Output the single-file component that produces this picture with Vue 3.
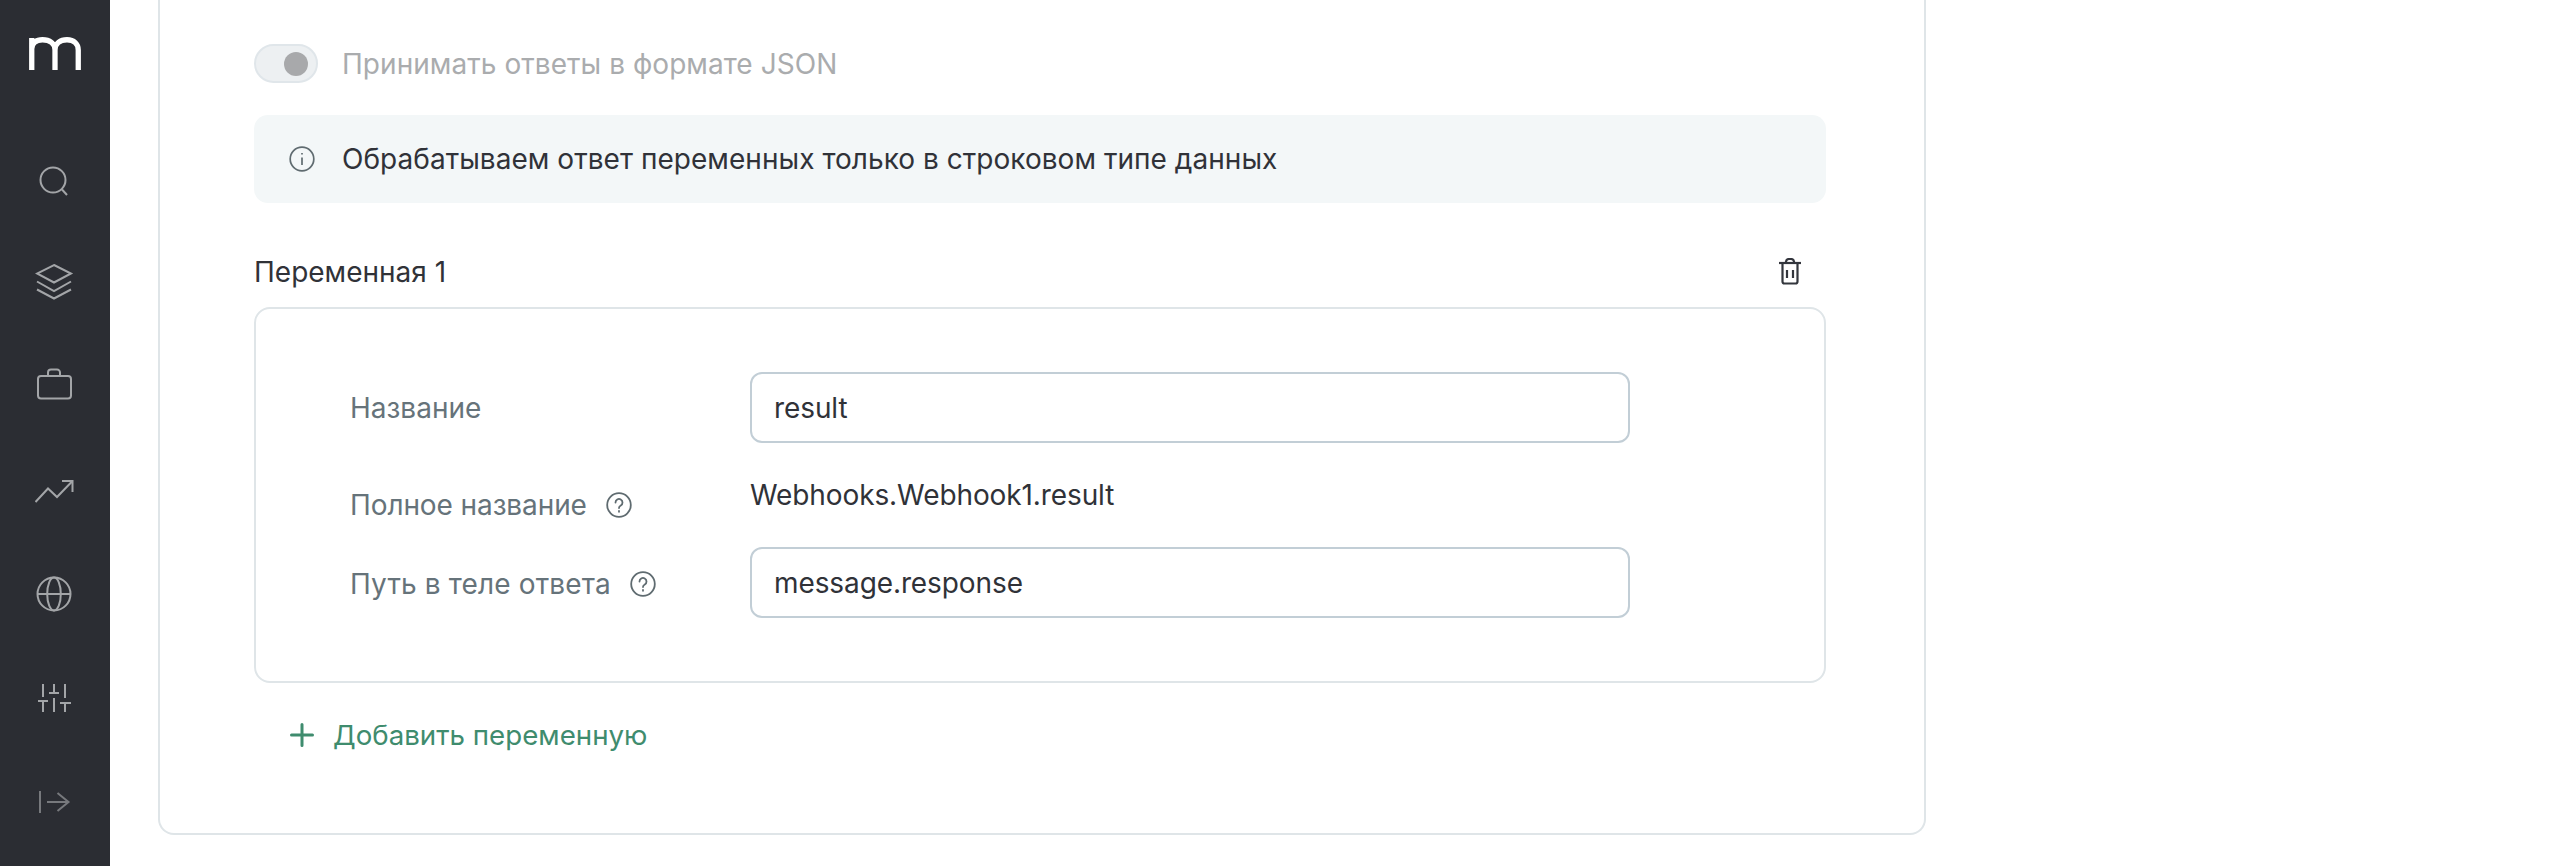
<script setup>
const rows = [
  { label: 'Название', value: 'result', input: true },
  { label: 'Полное название', value: 'Webhooks.Webhook1.result', help: true },
  { label: 'Путь в теле ответа', value: 'message.response', input: true, help: true },
]
</script>

<template>
  <div class="page">
    <nav class="sidebar">
      <svg class="logo" width="52" height="33" viewBox="0 0 52 33" fill="none" stroke="#fff" stroke-width="5.300">
        <path d="M2.75 33V1M2.75 12C2.75 5.500 7.500 2.750 13.500 2.750C20.500 2.750 26 6 26 13V33M26 13C26 6 31.500 2.750 38 2.750C45 2.750 49.250 7 49.250 13V33" />
      </svg>
      <div class="nav-item">
        <svg viewBox="0 0 40 40" fill="none" stroke="#a3a5a8" stroke-width="2">
          <circle cx="18" cy="23" r="12.500" /><path d="M27 32.500L32 38" />
        </svg>
      </div>
      <div class="nav-item">
        <svg viewBox="0 0 40 40" fill="none" stroke="#a3a5a8" stroke-width="2">
          <path d="M19 4L36 12.500L19 21.500L2 12.500Z" /><path d="M2 20.500L19 30L36 20.500" /><path d="M2 28.500L19 37.500L36 28.500" />
        </svg>
      </div>
      <div class="nav-item">
        <svg viewBox="0 0 40 40" fill="none" stroke="#a3a5a8" stroke-width="2">
          <rect x="3" y="11" width="33" height="22.500" rx="3" /><path d="M13 11V7.500A3 3 0 0 1 16 4.500H22A3 3 0 0 1 25 7.500V11" />
        </svg>
      </div>
      <div class="nav-item">
        <svg viewBox="0 0 40 40" fill="none" stroke="#a3a5a8" stroke-width="2">
          <path d="M0.500 32L13 18.500L22 27L37.500 11" /><path d="M27 11H37.500V22" />
        </svg>
      </div>
      <div class="nav-item">
        <svg viewBox="0 0 40 40" fill="none" stroke="#a3a5a8" stroke-width="2">
          <circle cx="19" cy="20" r="16.500" /><ellipse cx="19" cy="20" rx="6.800" ry="16.500" /><path d="M2.500 20H35.500" />
        </svg>
      </div>
      <div class="nav-item">
        <svg viewBox="0 0 40 40" fill="none" stroke="#a3a5a8" stroke-width="2">
          <path d="M8 6V19M3 23H13M8 23V34M19 6V15M14 15H24M19 20V34M30 6V20M25 25H36M30 25V34" />
        </svg>
      </div>
      <div class="nav-item">
        <svg viewBox="0 0 40 40" fill="none" stroke="#77797d" stroke-width="2">
          <path d="M5 9V31M12 20H33.500M22.500 11L33.500 20L22.500 29" />
        </svg>
      </div>
    </nav>

    <main class="main">
      <section class="card">
        <div class="toggle-row">
          <span class="toggle"><span class="knob"></span></span>
          <span class="toggle-label">Принимать ответы в формате JSON</span>
        </div>

        <div class="notice">
          <svg class="notice-icon" viewBox="0 0 26 26" fill="none" stroke="#5f6b70" stroke-width="1.700">
            <circle cx="13" cy="13" r="11.800" /><path d="M13 11.500V19" /><path d="M13 7V8.500" />
          </svg>
          <span class="notice-text">Обрабатываем ответ переменных только в строковом типе данных</span>
        </div>

        <div class="var-head">
          <span>Переменная 1</span>
          <svg class="trash" viewBox="0 0 24 28" fill="none" stroke="#33363d" stroke-width="2.200">
            <path d="M1 5H23" /><path d="M4.500 5V23.500A2 2 0 0 0 6.500 25.500H17.500A2 2 0 0 0 19.500 23.500V5" />
            <path d="M8 5V3.500A3 3 0 0 1 11 1H13A3 3 0 0 1 16 3.500V5" /><path d="M9 12V20M15 12V20" />
          </svg>
        </div>

        <div class="var-box">
          <div v-for="row in rows" :key="row.label" class="row" :class="{ plain: !row.input }">
            <div class="label">
              <span>{{ row.label }}</span>
              <svg v-if="row.help" class="help" viewBox="0 0 26 26" fill="none" stroke="#5f6b70" stroke-width="1.800">
                <circle cx="13" cy="13" r="11.800" />
                <path d="M9.500 10.500A3.500 3.500 0 1 1 14.800 13.500C13.600 14.200 13 15 13 16" stroke-linecap="round" />
                <path d="M13 19V19.800" stroke-linecap="round" />
              </svg>
            </div>
            <div v-if="row.input" class="input">{{ row.value }}</div>
            <div v-else class="value">{{ row.value }}</div>
          </div>
        </div>

        <div class="add">
          <svg class="plus" viewBox="0 0 24 24" fill="none" stroke="#3f8c6e" stroke-width="3" stroke-linecap="round"><path d="M12 1.500V22.500M1.500 12H22.500" /></svg>
          <span>Добавить переменную</span>
        </div>
      </section>
    </main>
  </div>
</template>

<style scoped>
.page {
  display: flex;
  height: 866px;
  overflow: hidden;
  background: #fff;
  font-family: Inter, "Noto Sans", sans-serif;
  font-size: 28px;
  line-height: 40px;
  color: #303238;
}
.sidebar {
  flex: none;
  box-sizing: border-box;
  width: 110px;
  height: 866px;
  padding-top: 37px;
  background: #2b2d33;
  display: flex;
  flex-direction: column;
  align-items: center;
}
.logo { flex: none; margin-bottom: 55px; margin-left: -1px; }
.nav-item {
  flex: none;
  height: 104.2px;
  width: 40px;
  display: flex;
  align-items: center;
}
.nav-item svg { width: 40px; height: 40px; }
.main { flex: none; padding-left: 48px; }
.card {
  box-sizing: border-box;
  width: 1768px;
  height: 835px;
  padding: 44px 98px 0 94px;
  border: 2px solid #dfe5e8;
  border-top: none;
  border-radius: 0 0 16px 16px;
}
.toggle-row { display: flex; align-items: center; height: 39px; }
.toggle {
  box-sizing: border-box;
  width: 64px;
  height: 39px;
  margin-right: 24px;
  padding-left: 28px;
  border: 2px solid #e0e6ea;
  border-radius: 20px;
  background: #edf0f2;
  display: flex;
  align-items: center;
}
.knob { width: 24px; height: 24px; border-radius: 50%; background: #a8a9ab; }
.toggle-label { color: #aaacae; letter-spacing: 0.05px; }
.notice {
  display: flex;
  align-items: center;
  height: 88px;
  margin-top: 32px;
  padding-left: 35px;
  background: #f3f7f8;
  border-radius: 14px;
}
.notice-icon { width: 26px; height: 26px; margin-right: 27px; }
.notice-text { letter-spacing: 0.04px; }
.var-head {
  display: flex;
  align-items: center;
  justify-content: space-between;
  height: 40px;
  margin-top: 49px;
  padding-right: 24px;
}
.trash { width: 24px; height: 28px; }
.var-box {
  box-sizing: border-box;
  height: 376px;
  margin-top: 15px;
  padding: 63px 0 0 94px;
  border: 2px solid #dfe5e8;
  border-radius: 16px;
}
.row { display: flex; align-items: center; height: 71px; margin-bottom: 32px; }
.row.plain { align-items: flex-start; height: 40px; }
.label { display: flex; align-items: center; width: 400px; color: #66737a; }
.row.plain .label { margin-top: 9.5px; }
.row.plain .label span { letter-spacing: -0.1px; }
.row:nth-child(3) .label { margin-top: 3px; }
.row:nth-child(3) .label span { letter-spacing: 0.15px; }
.value, .input { letter-spacing: -0.1px; }
.help { width: 26px; height: 26px; margin-left: 19px; }
.input {
  box-sizing: border-box;
  width: 880px;
  height: 71px;
  padding-left: 22px;
  border: 2px solid #c2ced6;
  border-radius: 12px;
  display: flex;
  align-items: center;
}
.add {
  display: flex;
  align-items: center;
  margin-top: 32px;
  padding-left: 36px;
  font-size: 27.7px;
  color: #3f8c6e;
}
.plus { width: 24px; height: 24px; margin-right: 19px; }
</style>
